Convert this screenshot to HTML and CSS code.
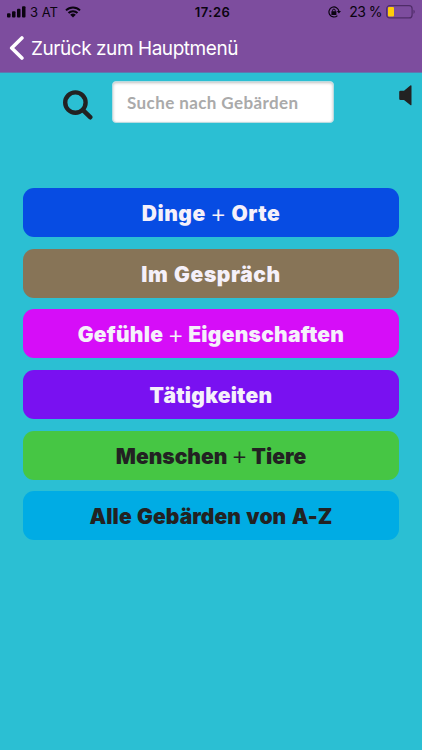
FILE: index.html
```html
<!DOCTYPE html>
<html lang="de">

<head>
    <meta charset="UTF-8">
    <meta name="viewport" content="width=device-width, initial-scale=1.0">
    <title>Gebärden</title>
    <link rel="stylesheet" href="styles.css">
</head>

<body>
    <header class="header">
        <div class="status-bar">
            <div class="status-left">
                <svg class="signal" width="19" height="12" viewBox="0 0 19 12">
                    <rect x="0" y="7.2" width="3.5" height="4.3" rx="1"/>
                    <rect x="5" y="5.2" width="3.5" height="6.3" rx="1"/>
                    <rect x="10" y="2.8" width="3.5" height="8.7" rx="1"/>
                    <rect x="15" y="0.2" width="3.5" height="11.3" rx="1"/>
                </svg>
                <span class="carrier">3 AT</span>
                <svg class="wifi" width="16" height="12" viewBox="0 0 16 12">
                    <path d="M1 4.4a10 10 0 0 1 14 0M3.5 7a6.4 6.4 0 0 1 9 0" fill="none" stroke="#0b0410" stroke-width="2"/>
                    <path d="M8 11.5 5.2 8.8a4 4 0 0 1 5.6 0z"/>
                </svg>
            </div>
            <span class="time">17:26</span>
            <div class="status-right">
                <svg class="lock" width="13" height="12" viewBox="0 0 13 12">
                    <path d="M10.9 5.2A5 5 0 1 0 9.4 9.6" fill="none" stroke="#0b0410" stroke-width="1.2"/>
                    <path d="M8.8 5H13l-2.1 2.6zM3.4 5.2h5v3.8h-5z"/>
                    <path d="M4.6 5.6V4.4a1.3 1.3 0 0 1 2.6 0v1.2" fill="none" stroke="#0b0410"/>
                </svg>
                <span class="percent">23 %</span>
                <svg class="battery" width="29" height="14" viewBox="0 0 29 14">
                    <rect x="0.7" y="0.7" width="25.4" height="12.2" rx="3" fill="none" stroke="#4f2c68" stroke-width="1.2"/>
                    <rect x="2" y="2" width="6" height="9.6" rx="1" fill="#ffcc0a"/>
                    <path d="M27.5 4.8c1.6.8 1.6 3.2 0 4z" fill="#4f2c68"/>
                </svg>
            </div>
        </div>
        <a class="back" href="#">
            <svg width="15" height="24" viewBox="0 0 15 24">
                <path d="M12.9 2 2.7 12l10.2 10" fill="none" stroke="#fff" stroke-width="3.6" stroke-linecap="round" stroke-linejoin="round"/>
            </svg>
            <span>Zurück zum Hauptmenü</span>
        </a>
    </header>

    <main>
        <div class="search">
            <svg class="search-icon" width="31" height="31" viewBox="0 0 31 31">
                <circle cx="13.4" cy="12.6" r="10.2" fill="none" stroke="#222" stroke-width="4.4"/>
                <path d="M21 20.2l7.2 7" stroke="#222" stroke-width="4.6" stroke-linecap="round"/>
            </svg>
            <input class="search-input" type="text" placeholder="Suche nach Gebärden">
            <svg class="speaker" width="14" height="21" viewBox="0 0 14 21">
                <path d="M1.5 5.8H5L11.3.5q1.2-.7 1.2.6v18.3q0 1.3-1.2.6L5 15H1.5Q.2 15 .2 13.8V7q0-1.2 1.3-1.2z" fill="#222"/>
            </svg>
        </div>

        <!-- Kategorien -->
        <nav class="categories">
            <a class="category things" href="#">Dinge <span>+</span> Orte</a>
            <a class="category talk" href="#">Im Gespräch</a>
            <a class="category feelings" href="#">Gefühle <span>+</span> Eigenschaften</a>
            <a class="category actions" href="#">Tätigkeiten</a>
            <a class="category people" href="#">Menschen <span>+</span> Tiere</a>
            <a class="category all" href="#">Alle Gebärden von A-Z</a>
        </nav>
    </main>
</body>

</html>
```
FILE: styles.css
```css
body {
    margin: 0;
    min-height: 100vh;
    background-color: #2bbfd3;
    font-family: Lato, sans-serif;
}

.header {
    height: 73px;
    box-sizing: border-box;
    background-color: #7d4d9e;
    border-bottom: 1px solid #5f77b0;
    font-family: Inter, sans-serif;
}

.status-bar {
    display: grid;
    grid-template-columns: 1fr auto 1fr;
    align-items: center;
    height: 24px;
    padding: 0 7px;
    color: #0b0410;
    font-size: 13px;
}

.status-bar svg {
    fill: #0b0410;
}

.status-left,
.status-right {
    display: flex;
    align-items: center;
}

.status-right {
    justify-content: flex-end;
}

.carrier {
    margin: 0 7px 0 4px;
}

.time {
    margin-left: 3px;
    font-weight: 600;
    letter-spacing: 0.5px;
}

.lock {
    margin-right: 8px;
}

.percent {
    margin-right: 4px;
    padding-bottom: 1px;
    font-size: 14px;
    letter-spacing: -0.5px;
}

.back {
    display: flex;
    align-items: center;
    height: 47px;
    padding-left: 9px;
    color: white;
    font-size: 19px;
    letter-spacing: -0.45px;
    text-decoration: none;
}

.back span {
    margin-left: 7px;
    padding-top: 1px;
}

.search {
    display: flex;
    align-items: flex-start;
    padding: 8px 9px 0 62px;
}

.search-icon {
    margin-top: 9px;
}

.search-input {
    width: 222px;
    height: 42px;
    margin-left: 19px;
    padding: 0 14px;
    box-sizing: border-box;
    border: 1px solid #b9dbe0;
    border-radius: 4px;
    background-color: white;
    box-shadow: inset 0 1px 3px rgba(0, 0, 0, 0.25);
    font-family: Lato, sans-serif;
    font-size: 17px;
    font-weight: bold;
    letter-spacing: 0.4px;
}

.search-input::placeholder {
    color: #aaa;
    opacity: 1;
}

.speaker {
    margin: 4px 0 0 auto;
}

.categories {
    display: grid;
    grid-auto-rows: 49px;
    gap: 11.7px;
    padding: 65px 23px 0;
}

.category {
    display: flex;
    justify-content: center;
    align-items: center;
    box-sizing: border-box;
    padding-top: 2px;
    border-radius: 11px;
    color: #f5f0fa;
    font-family: Inter, sans-serif;
    font-size: 21px;
    font-weight: 900;
    letter-spacing: 0.25px;
    word-spacing: 1px;
    line-height: 1;
    text-decoration: none;
    white-space: pre;
}

.category span {
    font-family: Lato, sans-serif;
    font-size: 24px;
    font-weight: normal;
}

.things {
    background-color: #074ce3;
    letter-spacing: 0.5px;
}

.talk {
    background-color: #877457;
    letter-spacing: 0.6px;
}

.feelings {
    background-color: #d60df8;
}

.actions {
    background-color: #7911f1;
}

.people {
    background-color: #46c644;
    color: #222;
    letter-spacing: 0;
}

.all {
    background-color: #00ace4;
    color: #222;
    letter-spacing: 0.1px;
}
```
